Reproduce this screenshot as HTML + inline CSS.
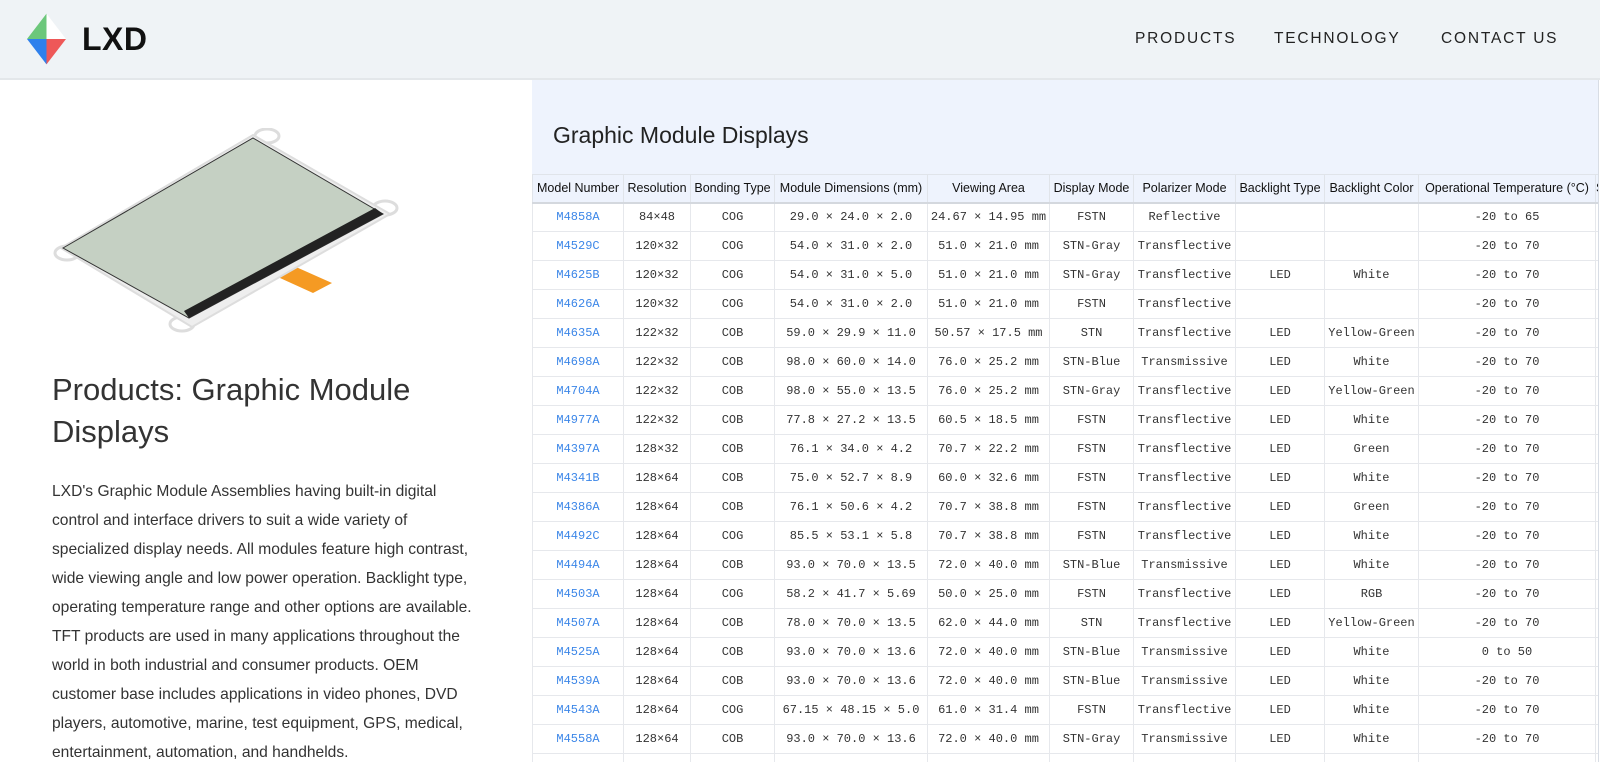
<!DOCTYPE html>
<html><head><meta charset="utf-8"><style>
*{margin:0;padding:0;box-sizing:border-box}
body{width:1600px;height:762px;overflow:hidden;background:#fff;font-family:"Liberation Sans",sans-serif;position:relative;color:#222}
.hdr{position:absolute;left:0;top:0;width:1600px;height:80px;background:#eff3f6;border-bottom:2px solid #e3e7ea}
.logo{position:absolute;left:82px;top:21px;font-weight:bold;font-size:32px;color:#111;letter-spacing:0.5px}
.nav{position:absolute;top:30px;font-size:15.5px;letter-spacing:1.8px;color:#222}
.panel{position:absolute;left:532px;top:80px;width:1067px;height:682px;background:#eef3fd;border-right:1px solid #d8dde5;overflow:hidden}
.panel h2{position:absolute;left:21px;top:42px;font-weight:normal;font-size:23px;color:#222}
table{position:absolute;left:0;top:94px;border-collapse:collapse;table-layout:fixed;width:1120px}
th{height:28px;font-weight:normal;font-size:12.5px;color:#111;border:1px solid #e0e4ea;border-bottom:2px solid #d4d8de;white-space:nowrap;overflow:hidden;background:#eef3fd}
td{height:29px;font-family:"Liberation Mono",monospace;font-size:12px;text-align:center;border:1px solid #e6e8ec;background:#fff;white-space:nowrap;color:#333}
td:first-child{color:#3b86e8}
.left h1{position:absolute;left:52px;top:369px;font-weight:normal;font-size:31px;line-height:42px;color:#333;width:430px}
.left p{position:absolute;left:52px;top:477px;width:428px;font-size:15.6px;line-height:29px;color:#333}
</style></head><body>
<div class="hdr">
<svg style="position:absolute;left:27px;top:13px" width="39" height="53" viewBox="0 0 40 53">
<polygon points="20,0 0,26 20,26" fill="#6cc77b"/>
<polygon points="20,0 40,26 20,26" fill="#fff"/>
<polygon points="0,26 20,26 20,52" fill="#2f80ec"/>
<polygon points="20,26 40,26 20,52" fill="#ee5858"/>
</svg>
<div class="logo">LXD</div>
<div class="nav" style="left:1135px">PRODUCTS</div>
<div class="nav" style="left:1274px">TECHNOLOGY</div>
<div class="nav" style="left:1441px">CONTACT US</div>
</div>
<svg style="position:absolute;left:45px;top:128px" width="360" height="210" viewBox="0 0 360 210">
<g fill="#fff" stroke="#ddd" stroke-width="3">
<ellipse cx="22" cy="125" rx="12" ry="7"/><ellipse cx="222" cy="8" rx="12" ry="7"/><ellipse cx="340" cy="80" rx="12" ry="7"/><ellipse cx="137" cy="196" rx="12" ry="7"/>
</g>
<polygon points="242,135 287,155 268,165 224,145" fill="#f59a23"/>
<polygon points="16,120 208,7 345,86 147,199" fill="#eee" stroke="#ddd" stroke-width="2"/>
<polygon points="18,120 208,10 338,86 144,190" fill="#c5d0c3" stroke="#333" stroke-width="1"/>
<polygon points="144,190 338,86 330,80 139,183" fill="#222"/>
</svg>
<div class="left"><h1>Products: Graphic Module Displays</h1>
<p>LXD's Graphic Module Assemblies having built-in digital control and interface drivers to suit a wide variety of specialized display needs. All modules feature high contrast, wide viewing angle and low power operation. Backlight type, operating temperature range and other options are available. TFT products are used in many applications throughout the world in both industrial and consumer products. OEM customer base includes applications in video phones, DVD players, automotive, marine, test equipment, GPS, medical, entertainment, automation, and handhelds.</p></div>
<div class="panel"><h2>Graphic Module Displays</h2>
<table>
<colgroup><col style="width:91px"><col style="width:67px"><col style="width:84px"><col style="width:153px"><col style="width:122px"><col style="width:84px"><col style="width:102px"><col style="width:89px"><col style="width:94px"><col style="width:177px"><col style="width:78px"></colgroup>
<tr><th>Model Number</th><th>Resolution</th><th>Bonding Type</th><th>Module Dimensions (mm)</th><th>Viewing Area</th><th>Display Mode</th><th>Polarizer Mode</th><th>Backlight Type</th><th>Backlight Color</th><th>Operational Temperature (°C)</th><th style="text-align:left">Storage</th></tr>
<tr><td>M4858A</td><td>84×48</td><td>COG</td><td>29.0 × 24.0 × 2.0</td><td>24.67 × 14.95 mm</td><td>FSTN</td><td>Reflective</td><td></td><td></td><td>-20 to 65</td><td></td></tr>
<tr><td>M4529C</td><td>120×32</td><td>COG</td><td>54.0 × 31.0 × 2.0</td><td>51.0 × 21.0 mm</td><td>STN-Gray</td><td>Transflective</td><td></td><td></td><td>-20 to 70</td><td></td></tr>
<tr><td>M4625B</td><td>120×32</td><td>COG</td><td>54.0 × 31.0 × 5.0</td><td>51.0 × 21.0 mm</td><td>STN-Gray</td><td>Transflective</td><td>LED</td><td>White</td><td>-20 to 70</td><td></td></tr>
<tr><td>M4626A</td><td>120×32</td><td>COG</td><td>54.0 × 31.0 × 2.0</td><td>51.0 × 21.0 mm</td><td>FSTN</td><td>Transflective</td><td></td><td></td><td>-20 to 70</td><td></td></tr>
<tr><td>M4635A</td><td>122×32</td><td>COB</td><td>59.0 × 29.9 × 11.0</td><td>50.57 × 17.5 mm</td><td>STN</td><td>Transflective</td><td>LED</td><td>Yellow-Green</td><td>-20 to 70</td><td></td></tr>
<tr><td>M4698A</td><td>122×32</td><td>COB</td><td>98.0 × 60.0 × 14.0</td><td>76.0 × 25.2 mm</td><td>STN-Blue</td><td>Transmissive</td><td>LED</td><td>White</td><td>-20 to 70</td><td></td></tr>
<tr><td>M4704A</td><td>122×32</td><td>COB</td><td>98.0 × 55.0 × 13.5</td><td>76.0 × 25.2 mm</td><td>STN-Gray</td><td>Transflective</td><td>LED</td><td>Yellow-Green</td><td>-20 to 70</td><td></td></tr>
<tr><td>M4977A</td><td>122×32</td><td>COB</td><td>77.8 × 27.2 × 13.5</td><td>60.5 × 18.5 mm</td><td>FSTN</td><td>Transflective</td><td>LED</td><td>White</td><td>-20 to 70</td><td></td></tr>
<tr><td>M4397A</td><td>128×32</td><td>COB</td><td>76.1 × 34.0 × 4.2</td><td>70.7 × 22.2 mm</td><td>FSTN</td><td>Transflective</td><td>LED</td><td>Green</td><td>-20 to 70</td><td></td></tr>
<tr><td>M4341B</td><td>128×64</td><td>COB</td><td>75.0 × 52.7 × 8.9</td><td>60.0 × 32.6 mm</td><td>FSTN</td><td>Transflective</td><td>LED</td><td>White</td><td>-20 to 70</td><td></td></tr>
<tr><td>M4386A</td><td>128×64</td><td>COB</td><td>76.1 × 50.6 × 4.2</td><td>70.7 × 38.8 mm</td><td>FSTN</td><td>Transflective</td><td>LED</td><td>Green</td><td>-20 to 70</td><td></td></tr>
<tr><td>M4492C</td><td>128×64</td><td>COG</td><td>85.5 × 53.1 × 5.8</td><td>70.7 × 38.8 mm</td><td>FSTN</td><td>Transflective</td><td>LED</td><td>White</td><td>-20 to 70</td><td></td></tr>
<tr><td>M4494A</td><td>128×64</td><td>COB</td><td>93.0 × 70.0 × 13.5</td><td>72.0 × 40.0 mm</td><td>STN-Blue</td><td>Transmissive</td><td>LED</td><td>White</td><td>-20 to 70</td><td></td></tr>
<tr><td>M4503A</td><td>128×64</td><td>COG</td><td>58.2 × 41.7 × 5.69</td><td>50.0 × 25.0 mm</td><td>FSTN</td><td>Transflective</td><td>LED</td><td>RGB</td><td>-20 to 70</td><td></td></tr>
<tr><td>M4507A</td><td>128×64</td><td>COB</td><td>78.0 × 70.0 × 13.5</td><td>62.0 × 44.0 mm</td><td>STN</td><td>Transflective</td><td>LED</td><td>Yellow-Green</td><td>-20 to 70</td><td></td></tr>
<tr><td>M4525A</td><td>128×64</td><td>COB</td><td>93.0 × 70.0 × 13.6</td><td>72.0 × 40.0 mm</td><td>STN-Blue</td><td>Transmissive</td><td>LED</td><td>White</td><td>0 to 50</td><td></td></tr>
<tr><td>M4539A</td><td>128×64</td><td>COB</td><td>93.0 × 70.0 × 13.6</td><td>72.0 × 40.0 mm</td><td>STN-Blue</td><td>Transmissive</td><td>LED</td><td>White</td><td>-20 to 70</td><td></td></tr>
<tr><td>M4543A</td><td>128×64</td><td>COG</td><td>67.15 × 48.15 × 5.0</td><td>61.0 × 31.4 mm</td><td>FSTN</td><td>Transflective</td><td>LED</td><td>White</td><td>-20 to 70</td><td></td></tr>
<tr><td>M4558A</td><td>128×64</td><td>COB</td><td>93.0 × 70.0 × 13.6</td><td>72.0 × 40.0 mm</td><td>STN-Gray</td><td>Transmissive</td><td>LED</td><td>White</td><td>-20 to 70</td><td></td></tr>
<tr><td></td><td></td><td></td><td></td><td></td><td></td><td></td><td></td><td></td><td></td><td></td></tr>
</table></div>
</body></html>
